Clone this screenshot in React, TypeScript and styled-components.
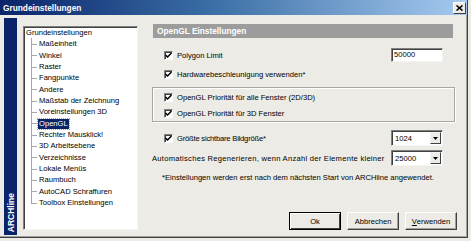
import { createGlobalStyle, styled } from 'styled-components';

const GlobalStyle = createGlobalStyle`
  html, body {
    margin: 0;
    padding: 0;
    background: #ecebe5;
  }
  body {
    width: 471px;
    height: 241px;
    overflow: hidden;
    font-family: 'Liberation Sans', Arial, sans-serif;
    font-size: 7.6px;
    color: #000;
  }
`;

const treeItems = [
  'Maßeinheit',
  'Winkel',
  'Raster',
  'Fangpunkte',
  'Andere',
  'Maßstab der Zeichnung',
  'Voreinstellungen 3D',
  'OpenGL',
  'Rechter Mausklick!',
  '3D Arbeitsebene',
  'Verzeichnisse',
  'Lokale Menüs',
  'Raumbuch',
  'AutoCAD Schraffuren',
  'Toolbox Einstellungen',
];

const Check = () => (
  <CheckBox>
    <svg width="7" height="7" viewBox="0 0 7 7">
      <path d="M0.5 3 L2.5 5 L6.5 1" fill="none" stroke="#000" strokeWidth="1.5" />
    </svg>
  </CheckBox>
);

const Select = ({ value }: { value: string }) => (
  <SelectBox>
    <span>{value}</span>
    <DropButton>
      <svg width="5" height="3" viewBox="0 0 5 3">
        <path d="M0 0 H5 L2.5 3 Z" fill="#000" />
      </svg>
    </DropButton>
  </SelectBox>
);

const App = () => {
  return (
    <>
      <GlobalStyle />
      <Window>
        <TitleBar>
          <span>Grundeinstellungen</span>
          <CloseButton>
            <svg width="7" height="6" viewBox="0 0 7 6">
              <path d="M0.5 0.5 L6.5 5.5 M6.5 0.5 L0.5 5.5" stroke="#000" strokeWidth="1.6" />
            </svg>
          </CloseButton>
        </TitleBar>
        <Body>
          <SideStrip>
            <span>ARCHline</span>
          </SideStrip>
          <Tree>
            <TreeRoot>Grundeinstellungen</TreeRoot>
            <TreeChildren>
              {treeItems.map((item) => (
                <TreeItem key={item}>
                  <TreeLabel $selected={item === 'OpenGL'}>{item}</TreeLabel>
                </TreeItem>
              ))}
            </TreeChildren>
          </Tree>
          <Panel>
            <Header>OpenGL Einstellungen</Header>
            <Row $mt={9}>
              <CheckLabel>
                <Check />
                Polygon Limit
              </CheckLabel>
              <TextField>50000</TextField>
            </Row>
            <Row $mt={3}>
              <CheckLabel>
                <Check />
                Hardwarebeschleunigung verwenden*
              </CheckLabel>
            </Row>
            <Group>
              <Row>
                <CheckLabel>
                  <Check />
                  OpenGL Priorität für alle Fenster (2D/3D)
                </CheckLabel>
              </Row>
              <Row>
                <CheckLabel>
                  <Check />
                  OpenGL Priorität für 3D Fenster
                </CheckLabel>
              </Row>
            </Group>
            <Row $mt={8}>
              <CheckLabel $spacing={-0.2}>
                <Check />
                Größte sichtbare Bildgröße*
              </CheckLabel>
              <Select value="1024" />
            </Row>
            <Row $mt={4} $pl={0}>
              <Label $spacing={0.26}>Automatisches Regenerieren, wenn Anzahl der Elemente kleiner</Label>
              <Select value="25000" />
            </Row>
            <Note>*Einstellungen werden erst nach dem nächsten Start von ARCHline angewendet.</Note>
            <Buttons>
              <Button $default>Ok</Button>
              <Button>Abbrechen</Button>
              <Button>
                <u>V</u>erwenden
              </Button>
            </Buttons>
          </Panel>
        </Body>
      </Window>
    </>
  );
};

export default App;

const Window = styled.div`
  width: 467px;
  height: 237px;
  border-right: 1px solid #404040;
  border-bottom: 1px solid #404040;
  box-shadow: inset -1px -1px #a0a0a0;
  background: #ecebe5;
`;

const TitleBar = styled.div`
  display: flex;
  align-items: center;
  justify-content: space-between;
  height: 15px;
  padding: 0 1px 0 3px;
  background: linear-gradient(to right, #0a246a 0%, #3a6ea5 45%, #a6caf0 100%);
  color: #fff;
  font-weight: 700;
  font-size: 8.3px;
`;

const CloseButton = styled.div`
  display: flex;
  align-items: center;
  justify-content: center;
  width: 11px;
  height: 10px;
  background: #ecebe5;
  border: 1px solid;
  border-color: #fff #404040 #404040 #fff;
`;

const Body = styled.div`
  display: flex;
  align-items: flex-start;
  padding: 3px 0 0 4px;
`;

const SideStrip = styled.div`
  display: flex;
  align-items: flex-end;
  justify-content: center;
  width: 13px;
  height: 217px;
  padding-bottom: 3px;
  box-sizing: border-box;
  background: #0a246a;

  > span {
    writing-mode: vertical-rl;
    transform: rotate(180deg);
    color: #fff;
    font-weight: 700;
    font-size: 8.5px;
  }
`;

const Tree = styled.div`
  width: 115px;
  height: 204px;
  margin: 8px 0 0 6px;
  box-sizing: border-box;
  background: #fff;
  border: 1px solid;
  border-color: #808080 #f4f4f4 #f4f4f4 #808080;
  box-shadow: inset 1px 1px #404040;
  padding-left: 2px;
`;

const TreeRoot = styled.div`
  height: 11.35px;
  line-height: 11.35px;
  white-space: nowrap;
`;

const TreeChildren = styled.div`
  margin-left: 5px;
`;

const TreeItem = styled.div`
  position: relative;
  height: 11.35px;
  line-height: 11.35px;
  padding-left: 7px;
  white-space: nowrap;

  &::before {
    content: '';
    position: absolute;
    left: 0;
    top: 50%;
    width: 6px;
    border-top: 1px solid #a8a8a8;
  }

  &::after {
    content: '';
    position: absolute;
    left: 0;
    top: 0;
    height: 100%;
    border-left: 1px solid #a8a8a8;
  }

  &:last-child::after {
    height: 50%;
  }
`;

const TreeLabel = styled.span<{ $selected?: boolean }>`
  display: inline-block;
  padding: 0 1px;
  line-height: 10px;
  background: ${(p) => (p.$selected ? '#0a246a' : 'transparent')};
  color: ${(p) => (p.$selected ? '#fff' : '#000')};
  outline: ${(p) => (p.$selected ? '1px dotted #a0a0a0' : 'none')};
`;

const Panel = styled.div`
  display: flex;
  flex-direction: column;
  width: 303px;
  margin: 6px 0 0 14px;
`;

const Header = styled.div`
  height: 14px;
  line-height: 14px;
  margin: 0 2px 0 1px;
  padding-left: 4px;
  background: #9c9c9c;
  color: #fff;
  font-weight: 700;
  font-size: 8.3px;
`;

const Row = styled.div<{ $mt?: number; $pl?: number }>`
  display: flex;
  align-items: center;
  justify-content: space-between;
  height: 16px;
  margin-top: ${(p) => p.$mt ?? 0}px;
  padding-left: ${(p) => p.$pl ?? 12}px;
  padding-right: 12px;
  white-space: nowrap;
`;

const Label = styled.span<{ $spacing?: number }>`
  letter-spacing: ${(p) => p.$spacing ?? 0}px;
`;

const CheckLabel = styled.label<{ $spacing?: number }>`
  display: flex;
  align-items: center;
  gap: 4px;
  letter-spacing: ${(p) => p.$spacing ?? 0}px;
`;

const CheckBox = styled.span`
  display: flex;
  align-items: center;
  justify-content: center;
  width: 9px;
  height: 9px;
  box-sizing: border-box;
  background: #fff;
  border: 1px solid;
  border-color: #808080 #fff #fff #808080;
  box-shadow: inset 1px 1px #404040;
`;

const Group = styled.div`
  display: flex;
  flex-direction: column;
  margin-top: 5px;
  padding-top: 1px;
  border: 1px solid #a8a8a0;
  box-shadow: inset 1px 1px #fff, 1px 1px #fff;

  > div {
    padding-left: 11px;
  }
`;

const TextField = styled.div`
  width: 52px;
  height: 14px;
  line-height: 12px;
  box-sizing: border-box;
  padding-left: 2px;
  background: #fff;
  border: 1px solid;
  border-color: #808080 #f4f4f4 #f4f4f4 #808080;
  box-shadow: inset 1px 1px #404040;
`;

const SelectBox = styled.div`
  display: flex;
  align-items: center;
  justify-content: space-between;
  width: 52px;
  height: 16px;
  box-sizing: border-box;
  padding: 1px 1px 1px 3px;
  background: #fff;
  border: 1px solid;
  border-color: #808080 #f4f4f4 #f4f4f4 #808080;
  box-shadow: inset 1px 1px #404040;
`;

const DropButton = styled.div`
  display: flex;
  align-items: center;
  justify-content: center;
  width: 11px;
  height: 12px;
  box-sizing: border-box;
  background: #ecebe5;
  border: 1px solid;
  border-color: #f4f4f4 #404040 #404040 #f4f4f4;
`;

const Note = styled.div`
  height: 14px;
  line-height: 14px;
  margin-top: 5px;
  padding-left: 10px;
  white-space: nowrap;
`;

const Buttons = styled.div`
  display: flex;
  justify-content: flex-end;
  gap: 6px;
  margin: 27px -2px 0 0;
`;

const Button = styled.div<{ $default?: boolean }>`
  display: flex;
  align-items: center;
  justify-content: center;
  width: 52px;
  height: 18px;
  box-sizing: border-box;
  background: #ecebe5;
  border: 1px solid;
  border-color: ${(p) => (p.$default ? '#000' : '#fff #404040 #404040 #fff')};
  box-shadow: ${(p) => (p.$default ? 'inset 1px 1px #fff, inset -1px -1px #404040' : 'inset -1px -1px #a0a0a0')};
`;
